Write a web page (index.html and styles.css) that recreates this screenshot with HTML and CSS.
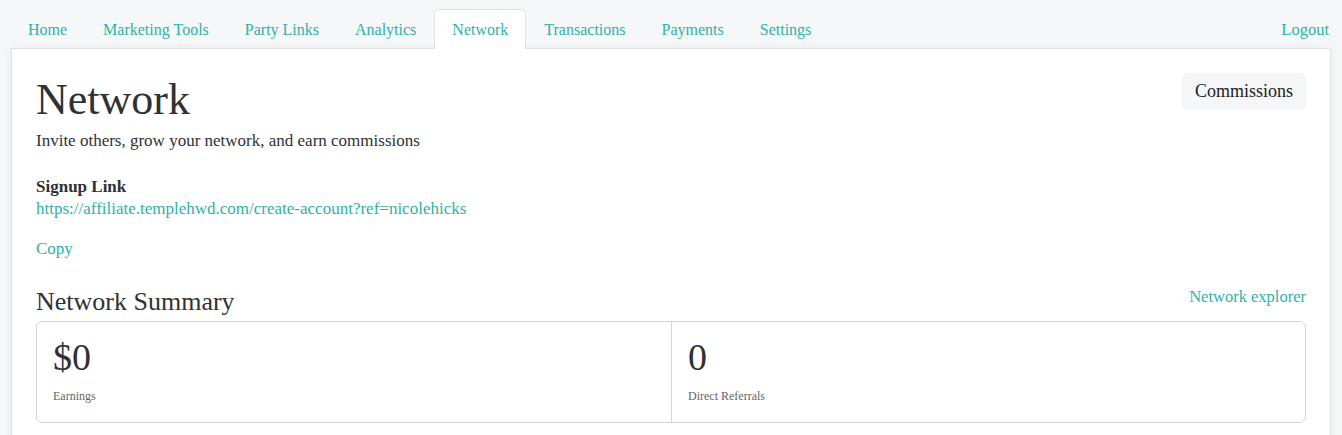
FILE: index.html
```html
<!doctype html>
<html lang="en">
  <head>
    <meta charset="UTF-8" />
    <meta name="viewport" content="width=device-width, initial-scale=1.0" />
    <title>Network</title>
    <link rel="stylesheet" href="styles.css">
  </head>
  <body>
    <nav class="tabs">
      <a class="tab" href="#">Home</a>
      <a class="tab" href="#">Marketing Tools</a>
      <a class="tab" href="#">Party Links</a>
      <a class="tab" href="#">Analytics</a>
      <a class="tab active" href="#">Network</a>
      <a class="tab" href="#">Transactions</a>
      <a class="tab" href="#">Payments</a>
      <a class="tab" href="#">Settings</a>
      <a class="tab logout" href="#">Logout</a>
    </nav>
    <main class="panel">
      <div class="page-head">
        <div>
          <h1>Network</h1>
          <p class="lead">Invite others, grow your network, and earn commissions</p>
        </div>
        <button class="btn-light">Commissions</button>
      </div>

      <div class="signup">
        <div class="signup-label">Signup Link</div>
        <a class="signup-url" href="#">https://affiliate.templehwd.com/create-account?ref=nicolehicks</a>
        <a class="copy" href="#">Copy</a>
      </div>

      <div class="summary-head">
        <h2>Network Summary</h2>
        <a href="#">Network explorer</a>
      </div>
      <div class="summary">
        <div class="stat">
          <div class="stat-value">$0</div>
          <div class="stat-label">Earnings</div>
        </div>
        <div class="stat">
          <div class="stat-value">0</div>
          <div class="stat-label">Direct Referrals</div>
        </div>
      </div>
    </main>
  </body>
</html>
```
FILE: styles.css
```css
body {
  margin: 0;
  font-family: "Liberation Serif", "DejaVu Serif", serif;
  background-color: #f6f7f9;
  color: #2f3134;
}

a {
  color: #2cb3a8;
  text-decoration: none;
}

.tabs {
  display: flex;
  padding: 10px 12px 0 10px;
}

.tab {
  padding: 7px 17px 6px;
  font-size: 16px;
  line-height: 24px;
  border: 1px solid transparent;
  border-top-left-radius: 5px;
  border-top-right-radius: 5px;
  margin-bottom: -1px;
}

.tab.active {
  margin-top: -1px;
  padding-top: 8px;
  background-color: #fff;
  border-color: #dee2e6 #dee2e6 #fff;
  position: relative;
}

.tab.logout {
  margin-left: auto;
  padding-right: 0;
  font-size: 16.5px;
}

.panel {
  margin: 0 11px;
  background-color: #fff;
  border: 1px solid #dee2e6;
  padding: 24px 24px 40px;
  box-shadow: 0 0 10px rgba(0, 0, 0, 0.05);
  min-height: 400px;
}

.page-head {
  display: flex;
  justify-content: space-between;
  align-items: flex-start;
}

h1 {
  margin: 0;
  font-size: 44px;
  font-weight: normal;
  line-height: 53px;
}

.lead {
  margin: 3px 0 0;
  font-size: 17px;
  line-height: 24px;
}

.btn-light {
  font-family: inherit;
  font-size: 18px;
  color: #222;
  background-color: #f5f6f8;
  border: none;
  border-radius: 5px;
  padding: 8px 13px;
  line-height: 21px;
}

.signup {
  margin-top: 23px;
  display: flex;
  flex-direction: column;
  align-items: flex-start;
}

.signup-label {
  font-weight: bold;
  font-size: 17px;
  line-height: 22px;
}

.signup-url {
  font-size: 17px;
  line-height: 22px;
}

.copy {
  margin-top: 17px;
  font-size: 17px;
  line-height: 24px;
}

.summary-head {
  margin-top: 26px;
  display: flex;
  justify-content: space-between;
  align-items: flex-start;
}

h2 {
  margin: 0;
  font-size: 26px;
  font-weight: normal;
  line-height: 30px;
}

.summary-head a {
  font-size: 16.5px;
  line-height: 24px;
  margin-top: -2px;
}

.summary {
  margin-top: 4px;
  display: grid;
  grid-template-columns: 1fr 1fr;
  border: 1px solid #d4d4d4;
  border-radius: 6px;
}

.stat {
  padding: 12px 16px 18px;
}

.stat + .stat {
  border-left: 1px solid #d4d4d4;
}

.stat-value {
  font-size: 38px;
  line-height: 46px;
}

.stat-label {
  margin-top: 8px;
  font-size: 12px;
  line-height: 16px;
  color: #666;
}
```
